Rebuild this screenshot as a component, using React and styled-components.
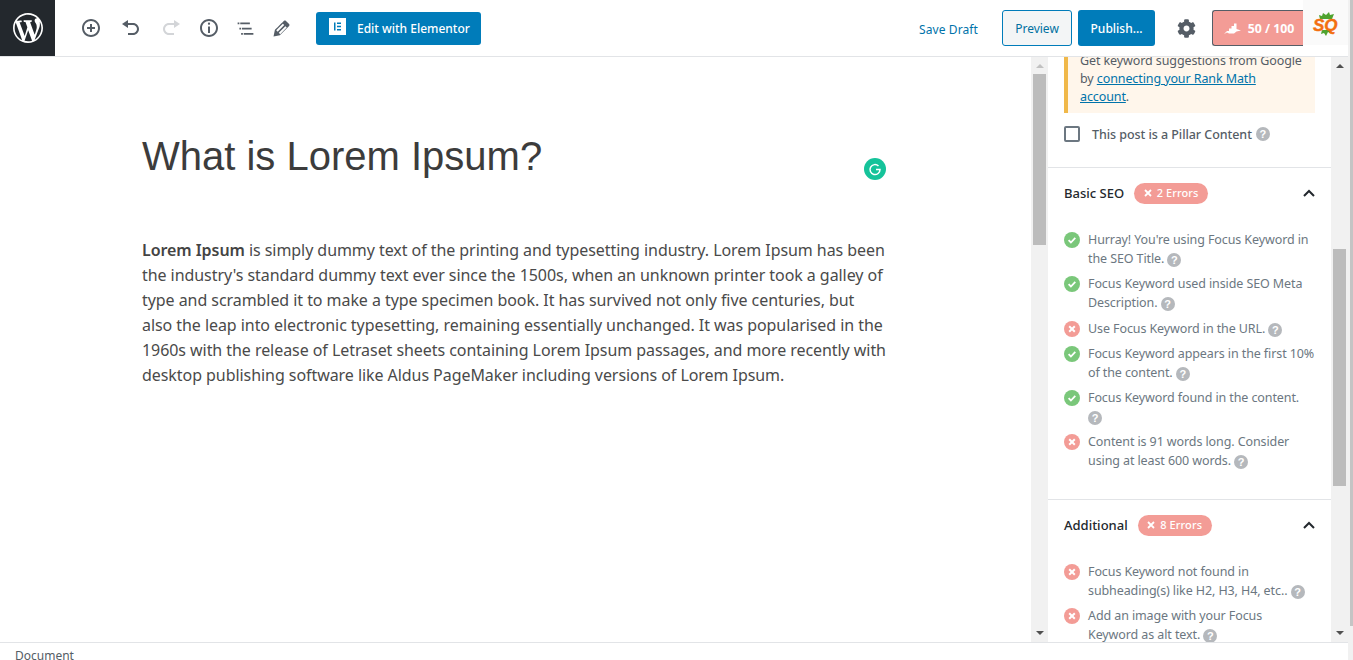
import React from "react";
import styled, { createGlobalStyle } from "styled-components";
import { FaCog } from "react-icons/fa";

const Global = createGlobalStyle`
  html, body { margin: 0; padding: 0; height: 100%; overflow: hidden; background: #f1f1f1; }
  #root { height: 100%; }
  * { box-sizing: border-box; }
`;
const SANS = `"Noto Sans", "Open Sans", sans-serif`;

const Page = styled.div`display: flex; width: 1353px; height: 660px;`;
const Frame = styled.div`
  width: 1348px; height: 660px; flex: none; display: flex; flex-direction: column;
  background: #fff; font-family: ${SANS}; color: #555d66; overflow: hidden;
`;
const OuterBar = styled.div`flex: 1; background: #f1f1f1; display: flex; justify-content: flex-end;`;
const OuterThumb = styled.div`width: 3px; height: 626px; background: #c4c4c4;`;
const TopBar = styled.header`
  height: 57px; flex: none; display: flex; align-items: center;
  background: #fff; border-bottom: 1px solid #e2e4e7;
`;
const WpTile = styled.div`
  width: 55px; height: 56px; flex: none; background: #23282d;
  display: flex; align-items: center; justify-content: center;
`;
const ToolGroup = styled.div`display: flex; align-items: center; margin-left: 26px;`;
const ToolIcon = styled.svg`
  width: ${p => p.$s ?? 20}px; height: ${p => p.$s ?? 20}px; flex: none; display: block;
  margin-left: ${p => p.$gap ?? 0}px;
  fill: ${p => (p.$off ? "#d3d5d8" : "#555d66")};
`;
const ElementorBtn = styled.button`
  margin-left: 23px; width: 165px; height: 33px; border: 0; border-radius: 3px;
  background: #007cba; color: #fff; font: 500 12px ${SANS};
  display: flex; align-items: center; padding: 0 0 0 13px; gap: 11px;
  svg { margin-top: -3px; }
`;
const Spacer = styled.div`flex: 1;`;
const SaveDraft = styled.span`
  color: #0073aa; font-size: 12px; margin-right: 24px; letter-spacing: .1px; padding-top: 2px;
`;
const PreviewBtn = styled.button`
  width: 70px; height: 36px; border: 1px solid #007cba; border-radius: 3px;
  background: #f3f5f6; color: #0071a1; font: 12px ${SANS}; padding: 0;
`;
const PublishBtn = styled.button`
  width: 77px; height: 36px; margin-left: 6px; border: 0; border-radius: 3px;
  background: #007cba; color: #fff; font: 500 12px ${SANS}; padding: 0;
`;
const GearWrap = styled.div`
  margin: 0 16px 0 21px; width: 20px; height: 20px; flex: none; color: #555d66;
  display: flex; align-items: center; justify-content: center;
`;
const ScoreBtn = styled.div`
  width: 91px; height: 36px; border: 1px solid #555d66; border-right: 0; border-radius: 3px 0 0 3px;
  background: #f39c96; color: #fff; font-weight: 700; font-size: 12.3px;
  display: flex; align-items: center; justify-content: center; gap: 7px; padding-left: 2px;
`;
const LogoWrap = styled.div`
  width: 45px; height: 45px; margin-top: -11px; flex: none; background: #fafafa;
  display: flex; align-items: center; justify-content: center;
`;

const Body = styled.div`flex: 1; display: flex; min-height: 0;`;
const Editor = styled.main`
  flex: 1; min-width: 0; padding: 73px 0 0 142px; overflow: hidden; position: relative;
`;
const Title = styled.h1`
  margin: 0; font: 400 40px/52px "Liberation Sans", Arial, sans-serif; color: #3c3c3c;
`;
const Para = styled.p`
  margin: 56px 0 0; width: 745px; font-size: 16px; line-height: 25px; color: #4a4a4a; letter-spacing: -0.06px;
  b { font-weight: 600; color: #444; }
`;
const Grammarly = styled.div`
  position: absolute; left: 864px; top: 101px; width: 22px; height: 22px; border-radius: 50%;
  background: #15c39a; display: flex; align-items: center; justify-content: center;
`;
const ScrollBar = styled.div`
  width: ${p => p.$w}px; flex: none; background: #f1f1f1; display: flex; flex-direction: column;
  align-items: center;
`;
const Arrow = styled.div`
  width: 0; height: 0; flex: none; border-left: 4px solid transparent; border-right: 4px solid transparent;
  ${p => (p.$up
    ? `border-bottom: 4px solid ${p.$c}; margin-top: 7px;`
    : `border-top: 4px solid ${p.$c}; margin-bottom: 7px;`)}
`;
const Track = styled.div`flex: 1; width: 100%; display: flex; justify-content: center;`;
const Thumb = styled.div`
  width: ${p => p.$w}px; height: ${p => p.$h}px; margin-top: ${p => p.$t}px; background: #bcbcbc; flex: none;
`;

const Sidebar = styled.aside`
  width: 283px; flex: none; overflow: hidden; background: #fff; display: flex; flex-direction: column;
`;
const Notice = styled.div`
  margin: -11px 16px 0 16px; padding: 6px 8px 6px 12px; width: 251px; height: 67px; flex: none; background: #fff6eb;
  border-left: 4px solid #f0b849; font-size: 12.5px; line-height: 18px; color: #555d66; letter-spacing: -0.1px;
  a { color: #0073aa; text-decoration: underline; }
`;
const PillarRow = styled.label`
  display: flex; align-items: center; margin: 12px 0 0 16px; height: 18px; flex: none;
  font-size: 12.5px; font-weight: 500; color: #555d66; letter-spacing: -0.06px;
`;
const Check = styled.span`
  width: 16px; height: 16px; border: 2px solid #6c7781; border-radius: 2px; margin-right: 12px; flex: none;
`;
const Help = styled.span`
  display: inline-flex; align-items: center; justify-content: center; width: 14px; height: 14px;
  border-radius: 50%; background: #b5b8bc; color: #fff; font: 700 11px/14px "Liberation Sans", sans-serif;
  letter-spacing: 0; margin-left: ${p => p.$ml ?? 4}px; vertical-align: -1px;
`;
const Section = styled.section`
  border-top: 1px solid #e2e4e7; padding: 14px 16px 0 16px; flex: none;
  margin-top: ${p => p.$mt}px;
`;
const SectionHead = styled.div`
  display: flex; align-items: center; height: 22px; margin-bottom: 26px;
`;
const SectionName = styled.span`
  font-size: 13px; font-weight: 500; color: #23282d;
`;
const Badge = styled.span`
  margin-left: 10px; height: 21px; width: 74px; border-radius: 11px; background: #f39c96; color: #fff;
  font-size: 11px; font-weight: 500; display: flex; align-items: center; justify-content: center; gap: 5px;
  letter-spacing: .1px; padding-bottom: 2px;
  svg { margin-top: 2px; }
`;
const Chevron = styled.svg`
  margin-left: auto; width: 12px; height: 8px; fill: none; stroke: #23282d; stroke-width: 2;
`;
const Checks = styled.ul`margin: 0; padding: 0; list-style: none;`;
const CheckItem = styled.li`
  display: flex; font-size: 12.5px; line-height: 19px; color: #6c7781; margin-bottom: 6px; letter-spacing: -0.1px;
  &:nth-child(2) { margin-bottom: 7px; }
  & > svg { flex: none; margin: 2px 8px 0 0; }
`;
const Footer = styled.footer`
  height: 18px; flex: none; border-top: 1px solid #e2e4e7; background: #fff; padding-left: 15px;
  font-size: 12px; line-height: 26px; color: #555d66; overflow: hidden;
`;

const Ok = () => (
  <svg width="16" height="16" viewBox="0 0 16 16">
    <circle cx="8" cy="8" r="8" fill="#7ac77a" />
    <path d="M4.600 8.200l2.300 2.300 4.400-4.600" fill="none" stroke="#fff" strokeWidth="1.800" />
  </svg>
);
const Bad = () => (
  <svg width="16" height="16" viewBox="0 0 16 16">
    <circle cx="8" cy="8" r="8" fill="#f39c96" />
    <path d="M5.200 5.200l5.600 5.600M10.800 5.200l-5.600 5.600" fill="none" stroke="#fff" strokeWidth="2" />
  </svg>
);
const MiniX = () => (
  <svg width="8" height="8" viewBox="0 0 8 8">
    <path d="M1 1l6 6M7 1L1 7" stroke="#fff" strokeWidth="1.800" />
  </svg>
);
const Chev = () => (
  <Chevron viewBox="0 0 12 8"><path d="M1 7l5-5 5 5" /></Chevron>
);

const basic = [
  [Ok, "Hurray! You're using Focus Keyword in the SEO Title."],
  [Ok, "Focus Keyword used inside SEO Meta Description."],
  [Bad, "Use Focus Keyword in the URL."],
  [Ok, "Focus Keyword appears in the first 10% of the content."],
  [Ok, "Focus Keyword found in the content."],
  [Bad, "Content is 91 words long. Consider using at least 600 words."],
];
const additional = [
  [Bad, "Focus Keyword not found in subheading(s) like H2, H3, H4, etc.."],
  [Bad, "Add an image with your Focus Keyword as alt text."],
];

const Items = ({ list }) => (
  <Checks>
    {list.map(([Icon, text]) => (
      <CheckItem key={text}>
        <Icon />
        <span>{text} <Help $ml={0}>?</Help></span>
      </CheckItem>
    ))}
  </Checks>
);

export default function App() {
  return (
    <Page>
      <Global />
      <Frame>
        <TopBar>
          <WpTile>
            <svg width="30" height="30" viewBox="0 0 20 20" fill="#fff">
              <path d="M20 10c0-5.500-4.500-10-10-10S0 4.500 0 10s4.500 10 10 10 10-4.500 10-10zM7.800 15.370L4.380 6.200c.55-.02 1.170-.08 1.170-.08.500-.06.440-1.130-.06-1.110 0 0-1.450.11-2.370.11-.18 0-.37 0-.58-.01C4.120 2.690 6.890 1.100 10 1.100c2.330 0 4.450.87 6.030 2.340-.67-.11-1.620.39-1.620 1.560 0 .73.420 1.330.87 2.050.35.610.55 1.360.55 2.460 0 1.490-1.400 5-1.400 5l-3.030-8.370c.54-.02.82-.17.82-.17.500-.05.440-1.250-.06-1.220 0 0-1.440.12-2.380.12-.87 0-2.330-.12-2.330-.12-.5-.03-.56 1.200-.06 1.220l.92.080 1.260 3.410zM17.410 10c.24-.64.740-1.870.43-4.250.7 1.290 1.050 2.710 1.050 4.250 0 3.290-1.730 6.240-4.400 7.780.97-2.590 1.940-5.200 2.920-7.780zM6.100 18.090C3.120 16.650 1.110 13.530 1.110 10c0-1.300.23-2.480.72-3.590C3.250 10.300 4.670 14.200 6.100 18.090zm4.030-6.630l2.580 6.980c-.86.290-1.760.450-2.710.450-.79 0-1.570-.11-2.290-.33.810-2.360 1.620-4.730 2.420-7.100z" />
            </svg>
          </WpTile>
          <ToolGroup>
            <ToolIcon viewBox="0 0 20 20">
              <path d="M10 1c-5 0-9 4-9 9s4 9 9 9 9-4 9-9-4-9-9-9zm0 16c-3.900 0-7-3.100-7-7s3.100-7 7-7 7 3.100 7 7-3.100 7-7 7zm1-11H9v3H6v2h3v3h2v-3h3V9h-3V6z" />
            </ToolIcon>
            <ToolIcon viewBox="0 0 20 20" $gap={20}>
              <path d="M12 5H7V2L1 6l6 4V7h5c2.200 0 4 1.800 4 4s-1.800 4-4 4H7v2h5c3.300 0 6-2.700 6-6s-2.700-6-6-6z" />
            </ToolIcon>
            <ToolIcon viewBox="0 0 20 20" $gap={20} $off>
              <path d="M8 5h5V2l6 4-6 4V7H8c-2.200 0-4 1.800-4 4s1.800 4 4 4h5v2H8c-3.300 0-6-2.700-6-6s2.700-6 6-6z" />
            </ToolIcon>
            <ToolIcon viewBox="0 0 20 20" $gap={18}>
              <path fillRule="evenodd" d="M10 1c4.970 0 9 4.030 9 9s-4.030 9-9 9-9-4.030-9-9 4.030-9 9-9zm0 2c-3.870 0-7 3.130-7 7s3.130 7 7 7 7-3.130 7-7-3.130-7-7-7zm1.100 2.700c0-.6-.5-1.100-1.100-1.100s-1.100.5-1.100 1.100.5 1.100 1.100 1.100 1.100-.5 1.100-1.100zM11 15V8.500H9V15h2z" />
            </ToolIcon>
            <ToolIcon viewBox="0 0 24 24" $s={21} $gap={16}>
              <path d="M5 5H3v2h2V5zm3 8h11v-2H8v2zm9-8H6v2h11V5zM7 11H5v2h2v-2zm0 8h2v-2H7v2zm3-2v2h11v-2H10z" />
            </ToolIcon>
            <ToolIcon viewBox="0 0 20 20" $s={23} $gap={14}>
              <path fillRule="evenodd" d="M13.890 3.390l2.710 2.720c.46.46.42 1.240.03 1.640l-8.010 8.020-5.560 1.160 1.160-5.580s7.600-7.630 7.990-8.030c.39-.39 1.220-.39 1.680.07zm-2.740 2.390l-5.700 5.700 1.240 1.240 5.700-5.700-1.240-1.240zm2.190 2.210l-5.700 5.700 1.240 1.240 5.700-5.700-1.240-1.240z" />
            </ToolIcon>
          </ToolGroup>
          <ElementorBtn>
            <svg width="17" height="17" viewBox="0 0 17 17">
              <rect width="17" height="17" fill="#fff" />
              <path d="M5 4.500h1.500v8H5zM8 4.500h4V6H8zM8 7.700h4v1.500H8zM8 11h4v1.500H8z" fill="#007cba" />
            </svg>
            Edit with Elementor
          </ElementorBtn>
          <Spacer />
          <SaveDraft>Save Draft</SaveDraft>
          <PreviewBtn>Preview</PreviewBtn>
          <PublishBtn>Publish...</PublishBtn>
          <GearWrap><FaCog size={19} /></GearWrap>
          <ScoreBtn>
            <svg width="17" height="12" viewBox="0 0 17 12" fill="#fff">
              <path d="M0 12l3-3h2V6.500h2.500V4H10V1.500h2.500V7L17 8.500l-4.500 1L10 11.500H5L3 10.500z" />
            </svg>
            50 / 100
          </ScoreBtn>
          <LogoWrap>
            <svg width="28" height="28" viewBox="0 0 28 28">
              <path d="M8 10L7 6l3 1 1-3 3 2 3-3 1 3 4-1-2 5zM10 21h9l-1 3-2-1-2 4-2-3-3 1z" fill="#4fa32f" />
              <text x="1" y="21.500" fill="#f36f10" stroke="#f36f10" strokeWidth=".4" fontFamily="Liberation Sans" fontWeight="700" fontStyle="italic" fontSize="17">SQ</text>
            </svg>
          </LogoWrap>
        </TopBar>
        <Body>
          <Editor>
            <Title>What is Lorem Ipsum?</Title>
            <Grammarly>
              <svg width="14" height="14" viewBox="0 0 14 14" fill="none" stroke="#fff" strokeWidth="1.500">
                <path d="M10.500 4A5 5 0 1 0 12 7.500H8" />
              </svg>
            </Grammarly>
            <Para>
              <b>Lorem Ipsum</b> is simply dummy text of the printing and typesetting industry. Lorem Ipsum has been the industry's standard dummy text ever since the 1500s, when an unknown printer took a galley of type and scrambled it to make a type specimen book. It has survived not only five centuries, but also the leap into electronic typesetting, remaining essentially unchanged. It was popularised in the 1960s with the release of Letraset sheets containing Lorem Ipsum passages, and more recently with desktop publishing software like Aldus PageMaker including versions of Lorem Ipsum.
            </Para>
          </Editor>
          <ScrollBar $w={17}>
            <Arrow $up $c="#c1c1c1" />
            <Track><Thumb $w={13} $h={171} $t={6} /></Track>
            <Arrow $c="#505050" />
          </ScrollBar>
          <Sidebar>
            <Notice>
              Get keyword suggestions from Google by <a>connecting your Rank Math account</a>.
            </Notice>
            <PillarRow><Check />This post is a Pillar Content<Help>?</Help></PillarRow>
            <Section $mt={24}>
              <SectionHead>
                <SectionName>Basic SEO</SectionName>
                <Badge><MiniX />2 Errors</Badge>
                <Chev />
              </SectionHead>
              <Items list={basic} />
            </Section>
            <Section $mt={23}>
              <SectionHead>
                <SectionName>Additional</SectionName>
                <Badge><MiniX />8 Errors</Badge>
                <Chev />
              </SectionHead>
              <Items list={additional} />
            </Section>
          </Sidebar>
          <ScrollBar $w={17}>
            <Arrow $up $c="#505050" />
            <Track><Thumb $w={13} $h={237} $t={181} /></Track>
            <Arrow $c="#505050" />
          </ScrollBar>
        </Body>
        <Footer>Document</Footer>
      </Frame>
      <OuterBar><OuterThumb /></OuterBar>
    </Page>
  );
}
